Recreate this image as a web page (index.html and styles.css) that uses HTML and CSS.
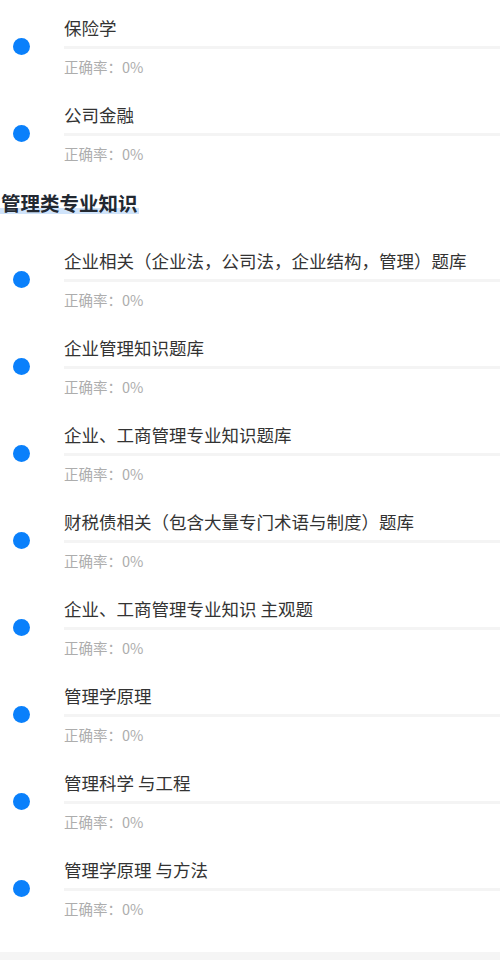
FILE: index.html
```html
<!DOCTYPE html>
<html lang="zh-CN">
<head>
<meta charset="utf-8">
<link rel="stylesheet" href="styles.css">
</head>
<body>
<div class="page">
  <section class="group">
    <div class="item"><span class="dot"></span><div class="info"><div class="title">保险学</div><div class="bar"></div><div class="rate">正确率：0%</div></div></div>
    <div class="item"><span class="dot"></span><div class="info"><div class="title">公司金融</div><div class="bar"></div><div class="rate">正确率：0%</div></div></div>
  </section>
  <section class="group">
    <h2 class="heading"><span class="heading-text">管理类专业知识</span></h2>
    <div class="item"><span class="dot"></span><div class="info"><div class="title">企业相关（企业法，公司法，企业结构，管理）题库</div><div class="bar"></div><div class="rate">正确率：0%</div></div></div>
    <div class="item"><span class="dot"></span><div class="info"><div class="title">企业管理知识题库</div><div class="bar"></div><div class="rate">正确率：0%</div></div></div>
    <div class="item"><span class="dot"></span><div class="info"><div class="title">企业、工商管理专业知识题库</div><div class="bar"></div><div class="rate">正确率：0%</div></div></div>
    <div class="item"><span class="dot"></span><div class="info"><div class="title">财税债相关（包含大量专门术语与制度）题库</div><div class="bar"></div><div class="rate">正确率：0%</div></div></div>
    <div class="item"><span class="dot"></span><div class="info"><div class="title">企业、工商管理专业知识 主观题</div><div class="bar"></div><div class="rate">正确率：0%</div></div></div>
    <div class="item"><span class="dot"></span><div class="info"><div class="title">管理学原理</div><div class="bar"></div><div class="rate">正确率：0%</div></div></div>
    <div class="item"><span class="dot"></span><div class="info"><div class="title">管理科学 与工程</div><div class="bar"></div><div class="rate">正确率：0%</div></div></div>
    <div class="item"><span class="dot"></span><div class="info"><div class="title">管理学原理 与方法</div><div class="bar"></div><div class="rate">正确率：0%</div></div></div>
  </section>
  <div class="footer"></div>
</div>
</body>
</html>
```
FILE: styles.css
```css
html, body {
  margin: 0;
  padding: 0;
  background: #ffffff;
}
body {
  font-family: "Noto Sans CJK SC", "Noto Sans", sans-serif;
  color: #333333;
  overflow: hidden;
}
.page {
  padding-top: 2.5px;
}
.group {
  display: flex;
  flex-direction: column;
}
.heading {
  margin: 0;
  padding: 12px 0 19px 0;
  font-size: 19.5px;
  line-height: 28px;
  font-weight: 700;
  color: #222831;
}
.heading-text {
  padding: 0 1px;
  background: linear-gradient(to bottom, transparent 0, transparent 70%, #cfe3fa 70%, #cfe3fa 90%, transparent 90%);
}
.item {
  display: flex;
  align-items: center;
  height: 87px;
}
.dot {
  flex: none;
  width: 17px;
  height: 17px;
  margin-left: 13px;
  margin-right: 34px;
  border-radius: 50%;
  background: #0a80fb;
}
.info {
  flex: 1;
  display: flex;
  flex-direction: column;
}
.title {
  font-size: 17.5px;
  line-height: 24px;
  color: #333333;
  white-space: nowrap;
}
.bar {
  height: 3px;
  margin-top: 6px;
  background: #f4f4f4;
}
.rate {
  margin-top: 8px;
  font-size: 14.5px;
  line-height: 20px;
  color: #adadad;
}
.footer {
  margin-top: 20.5px;
  height: 40px;
  background: #f5f5f5;
}
```
